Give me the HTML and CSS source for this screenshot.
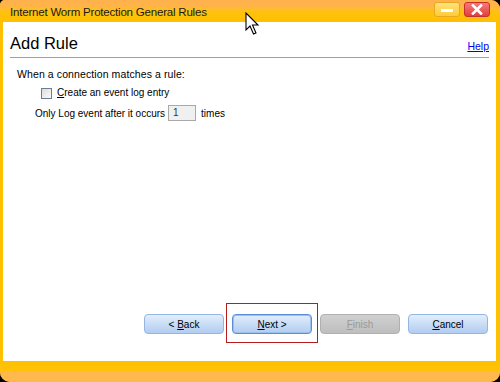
FILE: index.html
```html
<!DOCTYPE html>
<html>
<head>
<meta charset="utf-8">
<link rel="stylesheet" href="styles.css">
</head>
<body>
<div class="window">
  <div class="titlebar">
    <span class="title">Internet Worm Protection General Rules</span>
    <div class="controls">
      <span class="btn-min"><span class="bar"></span></span>
      <span class="btn-close">
        <svg width="14" height="11" viewBox="0 0 14 11"><path d="M3 1.5 L11 9.5 M11 1.5 L3 9.5" stroke="#fff" stroke-width="2.6" stroke-linecap="square"/></svg>
      </span>
    </div>
  </div>
  <div class="content">
    <div class="header">
      <h1 class="heading">Add Rule</h1>
      <a class="help" href="#">Help</a>
    </div>
    <div class="separator"></div>
    <div class="body">
      <div class="line">When a connection matches a rule:</div>
      <label class="check-row"><span class="checkbox"></span><span><u>C</u>reate an event log entry</span></label>
      <div class="log-row"><span>Only Log event after it occurs</span><span class="input">1</span><span>times</span></div>
    </div>
    <div class="buttons">
      <button class="btn">&lt; <u>B</u>ack</button>
      <button class="btn btn-next"><u>N</u>ext &gt;</button>
      <button class="btn btn-disabled"><u>F</u>inish</button>
      <button class="btn"><u>C</u>ancel</button>
    </div>
  </div>
  <div class="footer-band"></div>
  <div class="footer-base"></div>
  <svg class="cursor" width="16" height="25" viewBox="0 0 16 25"><path d="M1 1 L1 18 L5 14 L8.5 22 L11 21 L7.5 13 L13 13 Z" fill="#fff" stroke="#000" stroke-width="1.1" stroke-linejoin="miter"/></svg>
</div>
</body>
</html>
```
FILE: styles.css
```css
html, body {
  margin: 0;
  padding: 0;
  background: #000;
}
.window {
  position: relative;
  width: 500px;
  height: 382px;
  display: flex;
  flex-direction: column;
  font-family: "Liberation Sans", Arial, sans-serif;
  font-size: 10px;
  color: #000;
  overflow: hidden;
  border-radius: 5px 9px 10px 10px;
  background: #FFC000;
}
.titlebar {
  height: 22px;
  flex: none;
  display: flex;
  align-items: center;
  justify-content: space-between;
  background: linear-gradient(#FFB24C 0px, #FFB34A 6px, #FFBD2A 9px, #FFC10E 12px, #FFC000 22px);
  padding: 0 10px 0 10px;
}
.title {
  font-size: 11.5px;
  color: #1a1a1a;
  letter-spacing: -0.2px;
  margin-top: 1px;
}
.controls {
  display: flex;
  gap: 4px;
  align-items: center;
  margin-top: -3px;
}
.btn-min, .btn-close {
  width: 26px;
  height: 15px;
  border-radius: 3px;
  display: flex;
  align-items: center;
  justify-content: center;
  box-sizing: border-box;
}
.btn-min {
  background: linear-gradient(#FFE27A, #FFCB3A);
  border: 1px solid #E8A820;
}
.btn-min .bar {
  width: 12px;
  height: 3px;
  background: #fff;
  margin-top: 1px;
}
.btn-close {
  background: linear-gradient(#F57A7A, #E2403F);
  border: 1px solid #C83030;
}
.content {
  flex: 1;
  background: #fff;
  margin: 0 4px 0 3px;
  display: flex;
  flex-direction: column;
  padding: 0 7px 0 7px;
}
.header {
  display: flex;
  justify-content: space-between;
  align-items: flex-end;
  height: 34px;
}
.heading {
  margin: 0 0 3px 0;
  font-size: 16.5px;
  font-weight: normal;
  line-height: 20px;
}
.help {
  color: #0000EE;
  text-decoration: underline;
  font-size: 10.5px;
  margin-bottom: 4px;
  margin-right: 0;
}
.separator {
  height: 1px;
  background: #A0A0A0;
  margin-top: 1px;
}
.body {
  padding: 9px 0 0 7px;
  display: flex;
  flex-direction: column;
}
.line {
  line-height: 14px;
  font-size: 10.5px;
  letter-spacing: 0.1px;
}
.check-row {
  display: flex;
  align-items: center;
  gap: 5px;
  margin-top: 5px;
  margin-left: 24px;
  line-height: 14px;
}
.checkbox {
  width: 11px;
  height: 11px;
  border: 1px solid #6C7C96;
  background: linear-gradient(135deg, #DCDCD8, #FBFBFA);
  box-sizing: border-box;
}
.log-row {
  display: flex;
  align-items: center;
  margin-left: 18px;
  margin-top: 5px;
  height: 16px;
}
.input {
  width: 28px;
  height: 16px;
  box-sizing: border-box;
  border: 1px solid #A9A9A9;
  background: #F0F0F0;
  margin: 0 5px 0 3px;
  padding-left: 4px;
  line-height: 14px;
  color: #333;
}
.buttons {
  margin-top: auto;
  margin-bottom: 27px;
  display: flex;
  justify-content: flex-end;
  gap: 8px;
  padding-right: 1px;
}
.btn {
  position: relative;
  width: 80px;
  height: 20px;
  box-sizing: border-box;
  border-radius: 4px;
  border: 1px solid #94B6E2;
  background: linear-gradient(#E3EEFC, #C9DDF6 50%, #B2CDF0);
  font-family: "Liberation Sans", Arial, sans-serif;
  font-size: 10px;
  color: #000;
  padding: 0;
}
.btn-next {
  border: 1px solid #5C8ED6;
  box-shadow: inset 0 0 0 1px #9CC0EE;
}
.btn-next::after {
  content: "";
  position: absolute;
  left: -7px;
  right: -7px;
  top: -12px;
  bottom: -10px;
  border: 1px solid #B41E1E;
}
.btn-disabled {
  border: 1px solid #B0B0B0;
  background: linear-gradient(#D0D0D0, #BEBEBE);
  color: #9A9A9A;
}
.footer-band {
  height: 11px;
  flex: none;
  background: linear-gradient(#FFC000, #FFC30A);
}
.footer-base {
  height: 10px;
  flex: none;
  background: #FFB84E;
}
.cursor {
  position: absolute;
  left: 245px;
  top: 12px;
}
```
